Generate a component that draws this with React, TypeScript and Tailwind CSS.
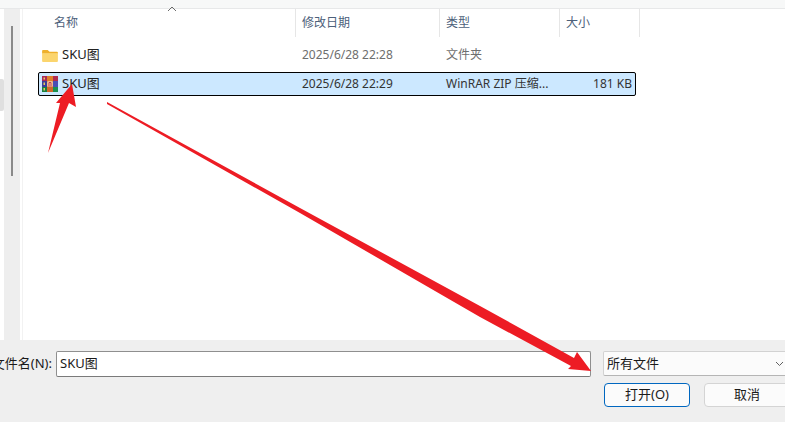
import React from "react";

const font = { fontFamily: '"Noto Sans", "Noto Sans CJK SC", sans-serif' };

function HeaderCell({ className, label }: { className: string; label: string }) {
  return (
    <div className={`flex h-[28px] items-center border-r border-[#e6e6e6] pl-[6px] text-[12px] text-[#4c607a] ${className}`}>
      {label}
    </div>
  );
}

function FolderIcon() {
  return (
    <svg width="16" height="13" viewBox="0 0 17 14">
      <path d="M0 2a1 1 0 0 1 1-1h5l2 2h8a1 1 0 0 1 1 1v1H0z" fill="#eeb02c" />
      <path d="M0 4.500h17V13a1 1 0 0 1-1 1H1a1 1 0 0 1-1-1z" fill="#fbd56e" />
    </svg>
  );
}

function RarIcon() {
  return (
    <svg width="16" height="16" viewBox="0 0 16 16">
      <rect x="0" y="0" width="5" height="5" fill="#a82a58" />
      <rect x="5" y="0" width="6" height="5" fill="#e07f2a" />
      <rect x="11" y="0" width="5" height="5" fill="#b02c50" />
      <rect x="0" y="5" width="5" height="6" fill="#3a3c98" />
      <rect x="5" y="5" width="6" height="6" fill="#e07f2a" />
      <rect x="11" y="5" width="5" height="6" fill="#4a4eb4" />
      <rect x="0" y="11" width="5" height="5" fill="#17803f" />
      <rect x="5" y="11" width="6" height="5" fill="#d0682a" />
      <rect x="11" y="11" width="5" height="5" fill="#1a9050" />
      <rect x="1.500" y="1.500" width="1.500" height="2" fill="#f0d060" />
      <rect x="1.500" y="6.500" width="1.500" height="2.500" fill="#e8c860" />
      <rect x="1.500" y="12" width="1.500" height="2.500" fill="#e8c860" />
      <rect x="5.500" y="5.500" width="5" height="5" fill="#f6f1ea" />
      <path d="M6.800 10.500V6.500h2.400v4M8 6.500v4" fill="none" stroke="#c8382c" strokeWidth="0.900" />
    </svg>
  );
}

export default function App() {
  return (
    <div className="relative flex h-[422px] w-[785px] flex-col overflow-hidden bg-white" style={font}>
      <div className="h-[9px] shrink-0 border-b border-[#e7e8e9] bg-[#f7f8f8]" />

      <div className="flex min-h-0 flex-1">
        <div className="relative w-[4px] shrink-0 bg-white">
          <div className="absolute left-0 top-[70px] h-[32px] w-[4px] rounded-r-[2px] bg-[#dfdfdf]" />
        </div>
        <div className="flex w-[16px] shrink-0 justify-center bg-[#eeeeee] pt-[17px]">
          <div className="h-[150px] w-[2px] bg-[#8a8a8a]" />
        </div>
        <div className="w-[2px] shrink-0 bg-white" />
        <div className="w-[1px] shrink-0 bg-[#f2f2f2]" />

        <div className="relative min-w-0 flex-1">
          <svg className="absolute left-[144px] top-[-3px]" width="10" height="6" viewBox="0 0 10 6">
            <path d="M1 5l4-4 4 4" fill="none" stroke="#6b6b6b" strokeWidth="1" />
          </svg>

          <div className="flex">
            <HeaderCell className="w-[273px] pl-[31px]" label="名称" />
            <HeaderCell className="w-[144px]" label="修改日期" />
            <HeaderCell className="w-[120px]" label="类型" />
            <HeaderCell className="w-[80px]" label="大小" />
          </div>

          <div className="ml-[15px] mt-[6px] flex w-[598px] flex-col gap-[5px] text-[12px] text-[#1a1a1a]">
            <div className="flex h-[24px] items-center border border-transparent">
              <div className="flex w-[257px] items-center gap-[4px] pl-[3px]">
                <FolderIcon />
                <span className="text-[13px] text-[#222222]">SKU图</span>
              </div>
              <span className="w-[144px] pl-[6px] text-[#6e6e6e]">2025/6/28 22:28</span>
              <span className="pl-[6px] text-[#6e6e6e]">文件夹</span>
            </div>
            <div className="flex h-[24px] items-center rounded-[2px] border border-black bg-[#cce8ff]">
              <div className="flex w-[257px] items-center gap-[4px] pl-[3px]">
                <RarIcon />
                <span className="text-[13px] text-[#222222]">SKU图</span>
              </div>
              <span className="w-[144px] pl-[6px] text-[#333333]">2025/6/28 22:29</span>
              <span className="w-[120px] pl-[6px] text-[#333333]">WinRAR ZIP 压缩...</span>
              <span className="flex-1 pr-[3px] text-right text-[#333333]">181 KB</span>
            </div>
          </div>
        </div>
      </div>

      <div className="flex h-[82px] shrink-0 bg-[#efefef] pt-[11px]">
        <div className="flex h-[26px] w-[591px] shrink-0 items-center justify-end">
          <span className="mr-[4px] whitespace-nowrap text-[13px] text-[#1a1a1a]">文件名(N):</span>
          <div className="flex h-[26px] w-[535px] shrink-0 items-center rounded-[2px] border border-[#8f8f8f] border-b-[#7a7a7a] bg-white pl-[3px] text-[13px] text-[#1a1a1a]">
            SKU图
          </div>
        </div>
        <div className="ml-[12px] flex min-w-0 flex-1 flex-col">
          <div className="flex h-[25px] w-[190px] items-center justify-between rounded-[2px] border border-[#d2d2d2] border-b-[#b5b5b5] bg-[#fbfbfb] pl-[3px] pr-[9px] text-[13px] text-[#1a1a1a]">
            <span>所有文件</span>
            <svg width="9" height="6" viewBox="0 0 9 6" className="mr-[-1px]">
              <path d="M1 1l3.500 3.500L8 1" fill="none" stroke="#606060" strokeWidth="1" />
            </svg>
          </div>
          <div className="ml-[1px] mt-[7px] flex gap-[14px]">
            <div className="flex h-[24px] w-[86px] shrink-0 items-center justify-center rounded-[4px] border border-[#0067c0] bg-[#fbfbfb] text-[13px] text-[#1a1a1a]">
              打开(O)
            </div>
            <div className="flex h-[24px] w-[86px] shrink-0 items-center justify-center rounded-[4px] border border-[#d4d4d4] bg-[#fbfbfb] text-[13px] text-[#1a1a1a]">
              取消
            </div>
          </div>
        </div>
      </div>

      <svg className="pointer-events-none absolute left-0 top-0" width="785" height="422" viewBox="0 0 785 422">
        <path d="M48 153L60 103L56 103L72 84L76 107L69 103Z" fill="#ed1c24" />
        <path d="M107 102L300 208L480 306L574 358L577 352L591 371L568 369L571 366L480 317L300 213L107 104Z" fill="#ed1c24" />
      </svg>
    </div>
  );
}
